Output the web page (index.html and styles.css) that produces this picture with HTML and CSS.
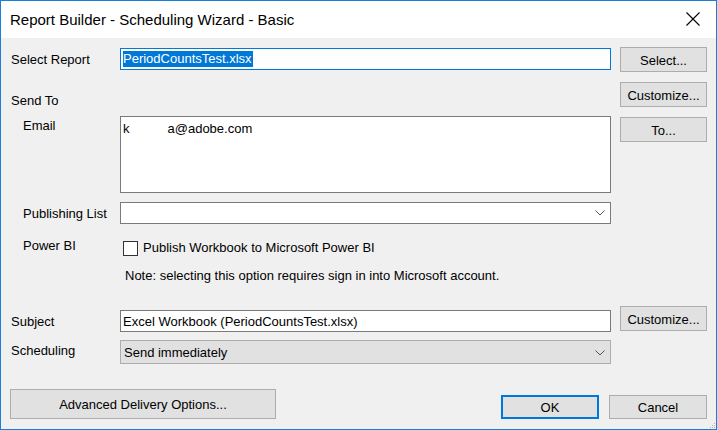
FILE: index.html
```html
<!DOCTYPE html>
<html>
<head>
<meta charset="utf-8">
<link rel="stylesheet" href="styles.css">
</head>
<body>
<div class="window">
  <div class="titlebar">
    <span class="title">Report Builder - Scheduling Wizard - Basic</span>
    <svg class="close" width="16" height="16" viewBox="0 0 16 16"><path d="M1.5 1.5 L14.5 14.5 M14.5 1.5 L1.5 14.5" stroke="#000" stroke-width="1.1" fill="none"/></svg>
  </div>
  <div class="content">
    <div class="row r1">
      <div class="lbl l1">Select Report</div>
      <div class="field focus f1"><span class="sel">PeriodCountsTest.xlsx</span></div>
      <div class="btn">Select...</div>
    </div>
    <div class="row r2">
      <div class="lbl l2">Send To</div>
      <div></div>
      <div class="btn">Customize...</div>
    </div>
    <div class="row r3">
      <div class="lbl sub l3">Email</div>
      <div class="field area">k<span class="gap"></span>a@adobe.com</div>
      <div class="btn b3">To...</div>
    </div>
    <div class="row r4">
      <div class="lbl sub l4">Publishing List</div>
      <div class="field combo"><span></span><svg width="10" height="6" viewBox="0 0 10 6"><polyline points="0.5,0.5 5,5 9.5,0.5" stroke="#555" stroke-width="1" fill="none"/></svg></div>
      <div></div>
    </div>
    <div class="row r5">
      <div class="lbl sub l5">Power BI</div>
      <div class="check">
        <span class="box"></span>
        <span class="ctext">Publish Workbook to Microsoft Power BI</span>
      </div>
      <div></div>
    </div>
    <div class="row r6">
      <div></div>
      <div class="note">Note: selecting this option requires sign in into Microsoft account.</div>
      <div></div>
    </div>
    <div class="row r7">
      <div class="lbl l7">Subject</div>
      <div class="field f7">Excel Workbook (PeriodCountsTest.xlsx)</div>
      <div class="btn">Customize...</div>
    </div>
    <div class="row r8">
      <div class="lbl l8">Scheduling</div>
      <div class="dcombo"><span>Send immediately</span><svg width="10" height="6" viewBox="0 0 10 6"><polyline points="0.5,0.5 5,5 9.5,0.5" stroke="#555" stroke-width="1" fill="none"/></svg></div>
      <div></div>
    </div>
    <div class="bottom">
      <div class="btn adv">Advanced Delivery Options...</div>
      <div class="btn ok">OK</div>
      <div class="btn cancel">Cancel</div>
    </div>
  </div>
  <svg class="grip" width="7" height="7" viewBox="0 0 7 7"><rect x="5" y="1" width="1" height="1" fill="#b0b0b0"/><rect x="3" y="3" width="1" height="1" fill="#b0b0b0"/><rect x="5" y="3" width="1" height="1" fill="#b0b0b0"/><rect x="1" y="5" width="1" height="1" fill="#b0b0b0"/><rect x="3" y="5" width="1" height="1" fill="#b0b0b0"/><rect x="5" y="5" width="1" height="1" fill="#b0b0b0"/></svg>
</div>
</body>
</html>
```
FILE: styles.css
```css
html, body {
  margin: 0;
  padding: 0;
  background: #f0f0f0;
}
.window {
  position: relative;
  width: 717px;
  height: 430px;
  box-sizing: border-box;
  border: 1px solid #1a80d6;
  background: #f0f0f0;
  display: flex;
  flex-direction: column;
  font-family: "Liberation Sans", Arial, sans-serif;
  font-size: 13px;
  line-height: 15px;
  color: #000;
}
.titlebar {
  height: 37px;
  background: #fff;
  display: flex;
  align-items: center;
  padding-left: 9px;
  padding-right: 8px;
}
.title {
  font-size: 15px;
  flex: 1;
  margin-top: -1px;
}
.close {
  margin-right: 7px;
  margin-top: -1px;
}
.content {
  display: flex;
  flex-direction: column;
}
.row {
  display: grid;
  grid-template-columns: 110px 491px 87px;
  column-gap: 9px;
  align-items: start;
}
.lbl {
  padding-left: 10px;
  white-space: nowrap;
}
.lbl.sub {
  padding-left: 22px;
}
.btn {
  height: 25px;
  box-sizing: border-box;
  border: 1px solid #adadad;
  background: #e1e1e1;
  display: flex;
  align-items: center;
  justify-content: center;
  white-space: nowrap;
  padding-top: 1px;
}
.field {
  box-sizing: border-box;
  height: 22px;
  border: 1px solid #7a7a7a;
  background: #fff;
  padding: 2px 0 0 2px;
  white-space: nowrap;
  overflow: hidden;
}
.field.focus {
  border-color: #0078d7;
}
.r1 { margin-top: 9px; height: 25px; }
.l1 { margin-top: 5px; }
.f1 {
  margin-top: 1px;
  padding: 2px 0 0 2px;
}
.sel {
  display: inline-block;
  background: #0078d7;
  color: #fff;
  line-height: 16px;
  padding-right: 1px;
}
.r2 { margin-top: 10px; height: 25px; }
.l2 { margin-top: 11px; }
.r3 { margin-top: 9px; height: 77px; }
.l3 { margin-top: 2px; }
.area {
  height: 77px;
  padding: 4px 0 0 2px;
}
.gap {
  display: inline-block;
  width: 38px;
}
.b3 { margin-top: 1px; }
.r4 { margin-top: 9px; height: 22px; }
.l4 { margin-top: 4px; }
.combo {
  display: flex;
  align-items: center;
  justify-content: space-between;
  padding: 0 5px 0 2px;
}
.r5 { margin-top: 13px; height: 19px; }
.l5 { margin-top: 1px; }
.check {
  display: flex;
  align-items: flex-start;
  padding-left: 3px;
}
.box {
  width: 15px;
  height: 15px;
  box-sizing: border-box;
  border: 1px solid #333;
  background: #fff;
  margin-top: 4px;
}
.ctext {
  margin-left: 5px;
  margin-top: 3px;
}
.r6 { margin-top: 12px; height: 15px; }
.note {
  padding-left: 5px;
  white-space: nowrap;
}
.r7 { margin-top: 23px; height: 26px; }
.l7 { margin-top: 8px; }
.f7 { margin-top: 4px; padding-top: 3px; }
.r8 { margin-top: 8px; height: 24px; }
.l8 { margin-top: 3px; }
.dcombo {
  height: 24px;
  box-sizing: border-box;
  border: 1px solid #adadad;
  background: #e1e1e1;
  display: flex;
  align-items: center;
  justify-content: space-between;
  padding: 1px 5px 0 3px;
}
.bottom {
  display: flex;
  align-items: flex-end;
  margin-top: 25px;
  padding: 0 9px;
}
.adv {
  width: 266px;
  height: 30px;
}
.ok {
  margin-left: auto;
  width: 98px;
  height: 24px;
  border: 2px solid #0078d7;
}
.cancel {
  margin-left: 10px;
  width: 98px;
  height: 24px;
}
.grip {
  position: absolute;
  right: 0;
  bottom: 0;
}
```
